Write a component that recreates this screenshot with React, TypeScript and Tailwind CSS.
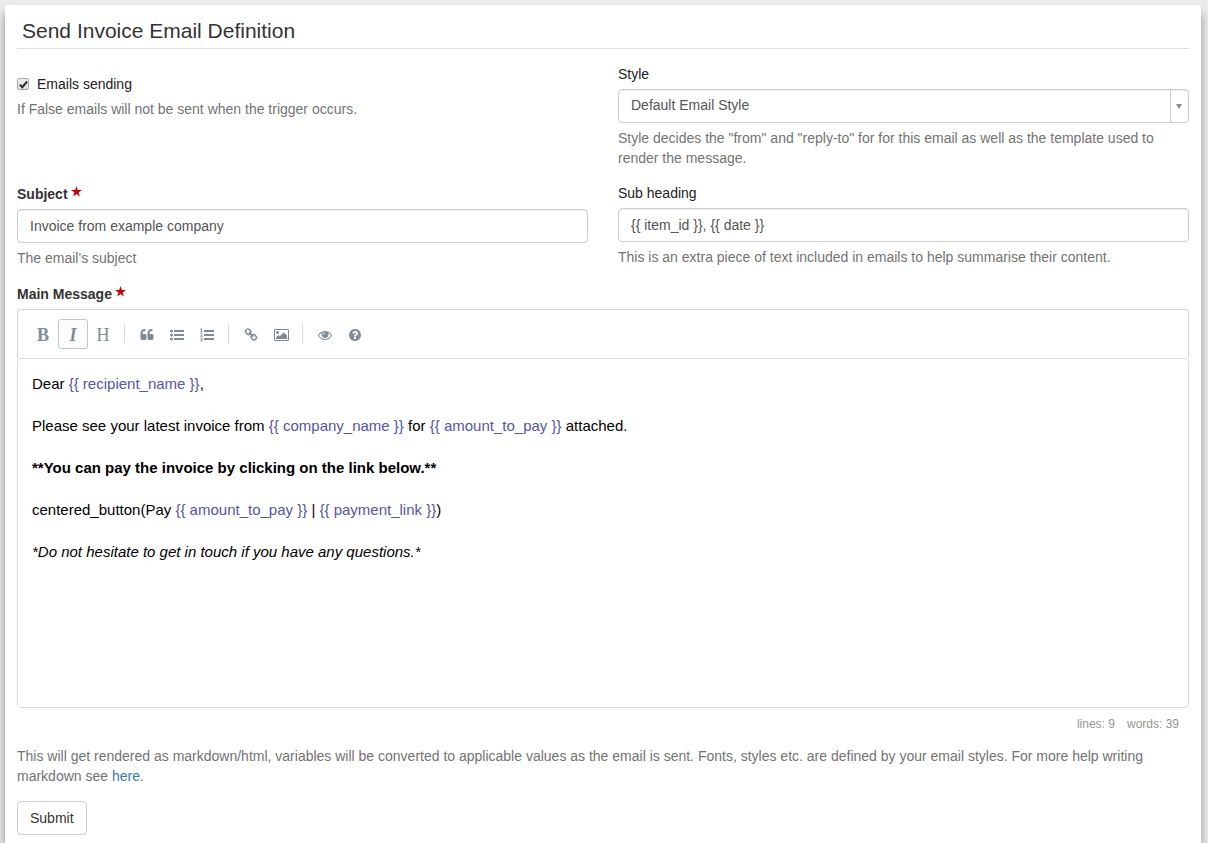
import React from "react";

const ICON_PATHS: Record<string, string> = {
  quote:
    "M832 960v384q0 80-56 136t-136 56h-384q-80 0-136-56t-56-136v-704q0-104 40.5-198.5t109.5-163.5 163.5-109.5 198.5-40.5h64q26 0 45 19t19 45v128q0 26-19 45t-45 19h-64q-106 0-181 75t-75 181v32q0 40 28 68t68 28h224q80 0 136 56t56 136zm896 0v384q0 80-56 136t-136 56h-384q-80 0-136-56t-56-136v-704q0-104 40.5-198.5t109.5-163.5 163.5-109.5 198.5-40.5h64q26 0 45 19t19 45v128q0 26-19 45t-45 19h-64q-106 0-181 75t-75 181v32q0 40 28 68t68 28h224q80 0 136 56t56 136z",
  bullets:
    "M384 1408a192 192 0 1 1-384 0a192 192 0 1 1 384 0zM384 896a192 192 0 1 1-384 0a192 192 0 1 1 384 0zM384 384a192 192 0 1 1-384 0a192 192 0 1 1 384 0zM512 1280h1280v256H512zM512 768h1280v256H512zM512 256h1280v256H512z",
  link:
    "M1520 1216q0-40-28-68l-208-208q-28-28-68-28-42 0-72 32 3 3 19 18.5t21.5 21.5 15 19 13 25.5 3.5 27.5q0 40-28 68t-68 28q-15 0-27.5-3.5t-25.5-13-19-15-21.5-21.5-18.5-19q-33 31-33 73 0 40 28 68l206 207q27 27 68 27 40 0 68-26l147-146q28-28 28-67zm-703-705q0-40-28-68l-206-207q-28-28-68-28-39 0-68 27l-147 146q-28 28-28 67 0 40 28 68l208 208q27 27 68 27 42 0 72-31-3-3-19-18.5t-21.5-21.5-15-19-13-25.5-3.5-27.5q0-40 28-68t68-28q15 0 27.5 3.5t25.5 13 19 15 21.5 21.5 18.5 19q33-31 33-73zm895 705q0 120-85 203l-147 146q-83 83-203 83-121 0-204-85l-206-207q-83-83-83-203 0-123 88-209l-88-88q-86 88-208 88-120 0-204-84l-208-208q-84-84-84-204t85-203l147-146q83-83 203-83 121 0 204 85l206 207q83 83 83 203 0 123-88 209l88 88q86-88 208-88 120 0 204 84l208 208q84 84 84 204z",
  image:
    "M640 576q0 80-56 136t-136 56-136-56-56-136 56-136 136-56 136 56 56 136zm1024 384v448h-1408v-192l320-320 160 160 512-512zm96-704h-1600q-13 0-22.5 9.5t-9.5 22.5v1216q0 13 9.5 22.5t22.5 9.5h1600q13 0 22.5-9.5t9.5-22.5v-1216q0-13-9.5-22.5t-22.5-9.5zm160 32v1216q0 66-47 113t-113 47h-1600q-66 0-113-47t-47-113v-1216q0-66 47-113t113-47h1600q66 0 113 47t47 113z",
  eye:
    "M1664 960q-152-236-381-353 61 104 61 225 0 185-131.5 316.5t-316.5 131.5-316.5-131.5-131.5-316.5q0-121 61-225-229 117-381 353 133 205 333.5 326.5t434.5 121.5 434.5-121.5 333.5-326.5zm-720-384q0-20-14-34t-34-14q-125 0-214.5 89.5t-89.5 214.5q0 20 14 34t34 14 34-14 14-34q0-86 61-147t147-61q20 0 34-14t14-34zm848 384q0 34-20 69-140 230-376.5 368.5t-499.5 138.5-499.5-139-376.5-368q-20-35-20-69t20-69q140-229 376.5-368t499.5-139 499.5 139 376.5 368q20 35 20 69z",
  help:
    "M1024 1376v-192q0-14-9-23t-23-9h-192q-14 0-23 9t-9 23v192q0 14 9 23t23 9h192q14 0 23-9t9-23zm256-672q0-88-55.5-163t-138.5-116-170-41q-243 0-371 213-15 24 8 42l132 100q7 6 19 6 16 0 25-12 53-68 86-92 34-24 86-24 48 0 85.5 26t37.5 59q0 38-20 61t-68 45q-63 28-115.5 86.5t-52.5 125.5v36q0 14 9 23t23 9h192q14 0 23-9t9-23q0-19 21.5-49.5t54.5-49.5q32-18 49-28.5t46-35 44.5-48 28-60.5 12.5-81zm384 192q0 209-103 385.5t-279.5 279.5-385.5 103-385.5-103-279.5-279.5-103-385.5 103-385.5 279.5-279.5 385.5-103 385.5 103 279.5 279.5 103 385.5z",
};

function Icon({ name }: { name: string }) {
  return (
    <svg
      viewBox={name === "image" ? "0 0 1920 1792" : "0 0 1792 1792"}
      className={name === "image" ? "h-[14px] w-[15px]" : "size-[14px]"}
      fill="currentColor"
      aria-hidden="true"
    >
      <path d={ICON_PATHS[name]} />
    </svg>
  );
}

function NumberedIcon() {
  return (
    <svg viewBox="0 0 14 14" className="size-[14px]" fill="none" stroke="currentColor" aria-hidden="true">
      <path d="M4 3h10M4 7h10M4 11h10" strokeWidth="2" />
      <path
        d="M.4 1.2L1.5.5V3.6M.3 3.7H2.6M.3 5.8Q1.4 4.8 2.3 5.6Q2.4 6.4.5 8.3H2.7M.3 10.3H2.4L1.3 11.5Q2.6 11.6 2.3 12.7Q1.5 13.7.2 13"
        strokeWidth=".9"
      />
    </svg>
  );
}

function Tool({ label, active, children }: { label: string; active?: boolean; children: React.ReactNode }) {
  return (
    <button
      type="button"
      title={label}
      aria-label={label}
      aria-pressed={active}
      className={
        "flex size-[30px] items-center justify-center rounded-[3px] border pt-[2px] font-['Liberation_Serif',serif] text-lg leading-none text-[#7f8c98] " +
        (active ? "border-[#bdc9c9] bg-[#fcfcfc]" : "border-transparent")
      }
    >
      {children}
    </button>
  );
}

function Separator() {
  return <span className="mr-[7px] ml-[6px] h-5 w-px bg-[#dcdcdc]" />;
}

function Star() {
  return (
    <svg
      viewBox="0 0 10 10"
      className="mb-[2px] ml-[3px] inline-block size-[11px] align-baseline"
      fill="#c00"
      role="img"
      aria-label="required"
    >
      <path d="M5 0L6.2 3.6H10L6.9 5.9L8.1 9.6L5 7.3L1.9 9.6L3.1 5.9L0 3.6H3.8Z" />
    </svg>
  );
}

function Var({ children }: { children: string }) {
  return <span className="text-[#5555aa]">{"{{ " + children + " }}"}</span>;
}

const field =
  "block h-[34px] w-full rounded-[4px] border border-[#ccc] bg-white px-3 text-[#555] shadow-[inset_0_1px_1px_rgba(0,0,0,0.075)]";
const help = "mt-[5px] text-[#737373]";

export default function App() {
  return (
    <div className="flex min-h-screen flex-col bg-[#ebebeb] pt-[5px] pr-[7px] pl-[5px] font-['Liberation_Sans',Arial,sans-serif] text-sm leading-5 text-[#222]">
      <main className="flex-1 rounded-t-[3px] bg-white px-3 pt-[14px] pb-2 shadow-[0_8px_10px_rgba(0,0,0,0.4)]">
        <h1 className="border-b border-[#ddd] px-[5px] pb-[5px] text-[21px] leading-6 text-[#333]">
          Send Invoice Email Definition
        </h1>
        <form onSubmit={(e) => e.preventDefault()}>
          <div className="mt-[15px] grid grid-cols-2 gap-x-[30px] gap-y-[15px]">
            <div className="pt-[10px]">
              <label className="flex items-center">
                <input type="checkbox" defaultChecked className="peer sr-only" />
                <span className="mr-2 flex size-3 items-center justify-center rounded-[2px] border border-[#aaa] bg-linear-to-b from-[#eee] to-[#ddd] text-transparent peer-checked:text-[#333]">
                  <svg viewBox="0 0 10 10" className="size-[9px]" fill="none" stroke="currentColor" strokeWidth="2.4">
                    <path d="M1 5.2L3.7 8L9 1.7" />
                  </svg>
                </span>
                Emails sending
              </label>
              <p className={help}>If False emails will not be sent when the trigger occurs.</p>
            </div>
            <div>
              <label htmlFor="style" className="mb-[5px] block">Style</label>
              <div className="relative">
                <select id="style" className={field + " appearance-none pb-[2px]"}>
                  <option>Default Email Style</option>
                </select>
                <span className="pointer-events-none absolute inset-y-px right-px flex w-[18px] items-center justify-center border-l border-[#ccc] pr-px">
                  <svg viewBox="0 0 6 5" className="h-[5px] w-[6px]" fill="#888" aria-hidden="true">
                    <path d="M0 0H6L3 5Z" />
                  </svg>
                </span>
              </div>
              <p className={help}>
                Style decides the "from" and "reply-to" for for this email as well as the template used to render the
                message.
              </p>
            </div>
            <div>
              <label htmlFor="subject" className="mb-[5px] block pt-px font-bold text-[#333]">
                Subject
                <Star />
              </label>
              <input id="subject" className={field} defaultValue="Invoice from example company" />
              <p className={help}>The email's subject</p>
            </div>
            <div>
              <label htmlFor="subheading" className="mb-[5px] block">Sub heading</label>
              <input id="subheading" className={field} defaultValue="{{ item_id }}, {{ date }}" />
              <p className={help}>This is an extra piece of text included in emails to help summarise their content.</p>
            </div>
          </div>

          <div className="mt-[15px]">
            <div id="message-label" className="mb-[5px] pt-px font-bold text-[#333]">
              Main Message
              <Star />
            </div>
            <div
              role="toolbar"
              aria-label="Formatting"
              className="flex h-[49px] items-center rounded-t-[4px] border border-b-0 border-[#d5d5d5] px-[10px]"
            >
              <Tool label="Bold"><span className="font-bold">B</span></Tool>
              <Tool label="Italic" active><span className="font-bold italic">I</span></Tool>
              <Tool label="Heading">H</Tool>
              <Separator />
              <Tool label="Quote"><Icon name="quote" /></Tool>
              <Tool label="Generic list"><Icon name="bullets" /></Tool>
              <Tool label="Numbered list"><NumberedIcon /></Tool>
              <Separator />
              <Tool label="Create link"><Icon name="link" /></Tool>
              <Tool label="Insert image"><Icon name="image" /></Tool>
              <Separator />
              <Tool label="Toggle preview"><Icon name="eye" /></Tool>
              <Tool label="Markdown guide"><Icon name="help" /></Tool>
            </div>
            <div
              role="textbox"
              aria-multiline="true"
              aria-labelledby="message-label"
              contentEditable
              suppressContentEditableWarning
              className="flex min-h-[350px] flex-col gap-[21px] rounded-[4px] border border-[#ddd] px-[14px] py-[14px] text-[15px] leading-[21px] text-black"
            >
              <p>Dear <Var>recipient_name</Var>,</p>
              <p>
                Please see your latest invoice from <Var>company_name</Var> for <Var>amount_to_pay</Var> attached.
              </p>
              <p className="font-bold">**You can pay the invoice by clicking on the link below.**</p>
              <p>centered_button(Pay <Var>amount_to_pay</Var> | <Var>payment_link</Var>)</p>
              <p className="italic">*Do not hesitate to get in touch if you have any questions.*</p>
            </div>
            <div className="flex justify-end gap-3 px-[10px] pt-2 pb-[9px] text-xs leading-4 text-[#959694]">
              <span>lines: 9</span>
              <span>words: 39</span>
            </div>
            <p className={help}>
              This will get rendered as markdown/html, variables will be converted to applicable values as the email is
              sent. Fonts, styles etc. are defined by your email styles. For more help writing markdown see{" "}
              <a href="#markdown" className="text-[#337ab7]">here</a>.
            </p>
          </div>
          <button type="submit" className="mt-[15px] h-[34px] rounded-[4px] border border-[#ccc] bg-white px-3 text-[#333]">
            Submit
          </button>
        </form>
      </main>
    </div>
  );
}
